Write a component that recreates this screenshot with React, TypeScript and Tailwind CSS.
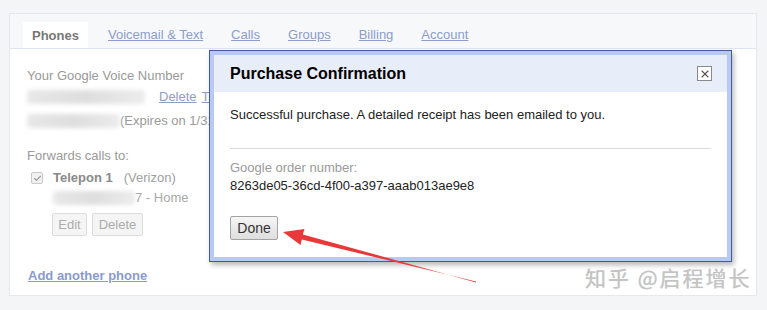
import { Check, X } from 'lucide-react'

function Blur({ w }: { w: number }) {
  return (
    <span
      className="inline-block h-[14px] rounded-sm bg-gradient-to-r from-[#e8e8e8] via-[#dedede] to-[#ececec] blur-[2px]"
      style={{ width: w }}
    />
  )
}

const tabs = ['Voicemail & Text', 'Calls', 'Groups', 'Billing', 'Account']

export default function App() {
  return (
    <div className="relative h-[310px] w-[767px] overflow-hidden bg-[#f4f5f7] font-['Liberation_Sans',Arial,sans-serif] text-[13px]">
      <div className="ml-[9px] mt-[13px] flex h-[283px] w-[748px] flex-col border border-[#e6e8ec] bg-white">
        <div className="flex h-[35px] items-end border-b border-[#dfe5f0] bg-[#f7f8fa] pl-[13px]">
          <div className="flex h-[26px] items-center bg-white px-[9px] pt-[1px] text-[13px] font-bold text-[#777]">
            Phones
          </div>
          <div className="ml-[20px] flex h-[26px] items-center gap-[28px] pb-[1px]">
            {tabs.map((t) => (
              <a key={t} className="cursor-pointer text-[#8c9dcb] underline">
                {t}
              </a>
            ))}
          </div>
        </div>

        <div className="flex flex-col pl-[17px] leading-[16px] text-[#9a9a9a]">
          <div className="mt-[19px]">Your Google Voice Number</div>
          <div className="mt-[5px] flex items-center">
            <Blur w={118} />
            <a className="ml-[14px] text-[#8c9dcb] underline">Delete</a>
            <a className="ml-[5px] text-[#8c9dcb] underline">Transfer</a>
          </div>
          <div className="mt-[8px] flex items-center">
            <Blur w={93} />
            <span className="whitespace-nowrap">(Expires on 1/31/2013)</span>
          </div>
          <div className="mt-[19px]">Forwards calls to:</div>
          <div className="mt-[6px] flex items-center">
            <span className="ml-[4px] flex h-[12px] w-[12px] items-center justify-center rounded-[2px] border border-[#c9c9c9] bg-[#f1f1f1]">
              <Check size={9} strokeWidth={3} className="text-[#9a9a9a]" />
            </span>
            <span className="ml-[10px] font-bold text-[#8a8a8a]">Telepon 1</span>
            <span className="ml-[11px] text-[#a0a0a0]">(Verizon)</span>
          </div>
          <div className="mt-[4px] flex items-center pl-[26px]">
            <Blur w={82} />
            <span className="text-[#a8a8a8]">7 - Home</span>
          </div>
          <div className="mt-[7px] flex gap-[5px] pl-[25px]">
            <button className="h-[23px] w-[35px] rounded-[2px] border border-[#dcdcdc] bg-[#f5f5f5] text-[13px] text-[#ababab]">
              Edit
            </button>
            <button className="h-[23px] w-[51px] rounded-[2px] border border-[#dcdcdc] bg-[#f5f5f5] text-[13px] text-[#ababab]">
              Delete
            </button>
          </div>
          <a className="mt-[32px] ml-[1px] w-fit font-bold text-[#8a9bcb] underline">Add another phone</a>
        </div>
      </div>

      {/* dialog */}
      <div className="absolute left-[209px] top-[50px] h-[212px] w-[523px] border border-[#435c98] bg-[#b8caf4] p-[4px] shadow-[2px_3px_5px_rgba(0,0,0,0.28)]">
        <div className="flex h-full flex-col bg-white">
          <div className="flex h-[37px] items-center justify-between bg-[#e8eef9] pl-[16px] pr-[15px]">
            <span className="pt-[1px] text-[16px] font-bold text-black">Purchase Confirmation</span>
            <span className="flex h-[15px] w-[15px] items-center justify-center border border-[#8a8a8a] bg-white">
              <X size={12} strokeWidth={2.2} className="text-[#555]" />
            </span>
          </div>
          <div className="flex flex-col px-[16px] leading-[16px] text-[#222]">
            <div className="mt-[15px]">Successful purchase. A detailed receipt has been emailed to you.</div>
            <div className="mt-[25px] h-px bg-[#dadada]" />
            <div className="mt-[11px] text-[#9a9a9a]">Google order number:</div>
            <div className="mt-[2px]">8263de05-36cd-4f00-a397-aaab013ae9e8</div>
            <button className="mt-[22px] h-[24px] w-[48px] rounded-[2px] border border-[#a3a3a3] bg-gradient-to-b from-[#f6f6f6] to-[#dedede] text-[14px] text-[#333]">
              Done
            </button>
          </div>
        </div>
      </div>

      {/* red arrow */}
      <svg className="absolute left-0 top-0" width="767" height="310" viewBox="0 0 767 310">
        <polygon
          points="283,232 304.5,229 302.8,234.4 476,282.4 476,281.6 301.8,239.4 300.5,245"
          fill="#e8383a"
        />
      </svg>

      <div className="absolute left-[585px] top-[264px] font-['Noto_Sans_CJK_SC',sans-serif] text-[21px] leading-[26px] tracking-[2px] text-[#c4c4c4] [text-shadow:0_0_1px_rgba(0,0,0,0.2)]">
        知乎 @启程增长
      </div>
    </div>
  )
}
